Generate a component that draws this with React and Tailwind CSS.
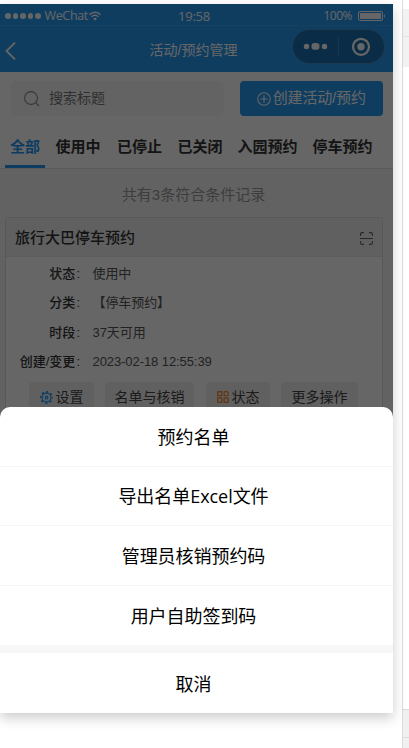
const tabs = [
  { label: "全部", cls: "w-[40px] text-[#2497f3]" },
  { label: "使用中", cls: "w-[66px]" },
  { label: "已停止", cls: "w-[57px]" },
  { label: "已关闭", cls: "w-[64px]" },
  { label: "入园预约", cls: "w-[71px]" },
  { label: "停车预约", cls: "w-[79px]" },
];

const fields = [
  ["状态", "使用中"],
  ["分类", "【停车预约】"],
  ["时段", "37天可用"],
  ["创建/变更", "2023-02-18 12:55:39"],
];

const actions = ["预约名单", "导出名单Excel文件", "管理员核销预约码", "用户自助签到码"];

function StatusBar() {
  return (
    <div className="flex h-[22px] items-center border-b border-[#3a9fee] pt-[3px] text-[13px] leading-none text-white">
      <div className="flex w-[132px] items-center pl-[5px]">
        <div className="flex gap-[2px]">
          {[0, 1, 2, 3, 4].map((i) => (
            <span key={i} className="h-[5.5px] w-[5.5px] rounded-full bg-white" />
          ))}
        </div>
        <span className="ml-[4px] w-[44.5px] whitespace-nowrap font-['Open_Sans','Noto_Sans',sans-serif] text-[12.5px] tracking-[-0.35px]">WeChat</span>
        <svg className="h-[10px] w-[12px]" viewBox="0 0 12 10" fill="none" stroke="white" strokeWidth="1.4">
          <path d="M.5 3.6Q6-1.2 11.5 3.6M2.5 5.8Q6 2.8 9.5 5.8" />
          <path d="M4.2 7.6Q6 6 7.8 7.6L6 9.8Z" fill="white" stroke="none" />
        </svg>
      </div>
      <div className="flex-1 pr-[5px] text-center font-['Open_Sans','Noto_Sans',sans-serif] text-[13px] tracking-[-0.2px]">19:58</div>
      <div className="flex w-[132px] items-center justify-end pr-[7px]">
        <span className="mr-[6px] font-['Open_Sans','Noto_Sans',sans-serif] text-[12px] tracking-[-0.5px]">100%</span>
        <svg className="h-[10px] w-[28px]" viewBox="0 0 28 10">
          <rect x=".5" y=".5" width="24" height="9" rx="1.5" fill="none" stroke="white" />
          <rect x="2" y="2" width="21" height="6" rx=".5" fill="white" />
          <path d="M26 3q2 2 0 4z" fill="white" />
        </svg>
      </div>
    </div>
  );
}

function NavBar() {
  return (
    <div className="flex h-[46px] items-center text-white">
      <div className="w-[100px] pl-[5px] pt-[4px]">
        <svg className="h-[18px] w-[11px]" viewBox="0 0 11 18" fill="none" stroke="white" strokeWidth="1.8">
          <path d="M10 .7 1.5 9 10 17.3" />
        </svg>
      </div>
      <div className="flex-1 pr-[5px] pt-[3px] text-center text-[14px]">活动/预约管理</div>
      <div className="w-[101px]">
        <div className="mt-[-5px] flex h-[35px] w-[93px] items-center rounded-full border border-[#4b91c7] bg-[#196fae]">
          <svg className="h-full w-full" viewBox="0 0 91 33" fill="white">
            <circle cx="13.5" cy="16.5" r="2.7" />
            <rect x="18.5" y="13" width="8" height="6.8" rx="3" />
            <circle cx="31.5" cy="16.5" r="2.7" />
            <path d="M45 7h1v19h-1z" fill="#4388bb" />
            <circle cx="68" cy="16.8" r="8" fill="none" stroke="white" strokeWidth="2.2" />
            <circle cx="68" cy="16.8" r="3.7" />
          </svg>
        </div>
      </div>
    </div>
  );
}

function GearIcon() {
  return (
    <svg className="h-[13px] w-[13px]" viewBox="0 0 26 26" fill="none" stroke="#2497f3">
      <circle cx="13" cy="13" r="8.8" strokeWidth="2.2" />
      <circle cx="13" cy="13" r="11.3" strokeWidth="3.2" strokeDasharray="4.4 4.475" strokeDashoffset="2.2" />
      <circle cx="13" cy="13" r="2.6" strokeWidth="2.4" />
    </svg>
  );
}

function GridIcon() {
  return (
    <svg className="h-[12px] w-[12px]" viewBox="0 0 12 12" fill="none" stroke="#f58a32" strokeWidth="1.3">
      <rect x=".7" y=".7" width="4" height="4" />
      <rect x="7.1" y=".7" width="4" height="4" rx="1" />
      <rect x=".7" y="7" width="4" height="4.3" />
      <rect x="7.1" y="7" width="4" height="4.3" />
    </svg>
  );
}

function RecordCard() {
  return (
    <div className="ml-[5px] h-[230px] w-[378px] rounded-t-[3px] border border-[#dcdcdc] bg-white">
      <div className="flex h-[39px] items-center justify-between border-b border-[#e6e6e6] bg-[#f0f0f0] pl-[9px] pr-[9px] pt-[2px]">
        <span className="text-[15px] font-medium text-[#333]">旅行大巴停车预约</span>
        <svg className="h-[13px] w-[13px]" viewBox="0 0 13 13" fill="none" stroke="#666" strokeWidth="1.1">
          <path d="M.6 4V2Q.6.6 2 .6h2M9 .6h2q1.4 0 1.4 1.4v2M.6 9v2q0 1.4 1.4 1.4h2M9 12.4h2q1.4 0 1.4-1.4V9M0 6.5h13" />
        </svg>
      </div>
      <div className="pt-[2px]">
        {fields.map(([label, value]) => (
          <div key={label} className="flex h-[29.4px] items-center text-[13px]">
            <span className="flex w-[74px] justify-end gap-[1px] font-medium text-[#333]">
              <span>{label}</span>
              <span>:</span>
            </span>
            <span className="ml-[12.5px] whitespace-nowrap tracking-[-0.08px] text-[#555]">{value}</span>
          </div>
        ))}
      </div>
      <div className="mt-[5px] flex pl-[23px] text-[14px] text-[#444]">
        <div className="flex h-[31px] w-[65px] items-center justify-center gap-[3px] rounded bg-[#f0f0f0]"><GearIcon />设置</div>
        <div className="ml-[11px] flex h-[31px] w-[89px] items-center justify-center rounded bg-[#f0f0f0]">名单与核销</div>
        <div className="ml-[12px] flex h-[31px] w-[64px] items-center justify-center gap-[3px] rounded bg-[#f0f0f0]"><GridIcon />状态</div>
        <div className="ml-[11px] flex h-[31px] w-[77px] items-center justify-center rounded bg-[#f0f0f0]">更多操作</div>
      </div>
    </div>
  );
}

function ActionSheet() {
  return (
    <div className="absolute inset-x-0 bottom-0 flex h-[306px] flex-col overflow-hidden rounded-t-[10px] bg-white font-['Open_Sans','Noto_Sans_CJK_SC',sans-serif] text-[18px] font-normal text-black">
      {actions.map((label, i) => (
        <div key={label} className={"flex h-[59.5px] items-center justify-center pr-[6px] pt-[2px] tracking-[-0.05px] " + (i < 3 ? "border-b border-[#f5f5f5]" : "")}>
          {label}
        </div>
      ))}
      <div className="h-[8px] bg-[#f7f7f7]" />
      <div className="flex h-[60px] items-center justify-center pr-[6px] pt-[3px]">取消</div>
    </div>
  );
}

export default function App() {
  return (
    <div className="flex h-[748px] w-[409px] overflow-hidden bg-white font-['Liberation_Sans','Noto_Sans_CJK_SC',sans-serif]">
      <div className="relative mt-[4px] h-[709px] w-[393px] shrink-0 bg-[#f5f5f5] shadow-[0_5px_12px_rgba(0,0,0,0.2)]">
        <div className="h-[68px] bg-[#2699f0]">
          <StatusBar />
          <NavBar />
        </div>
        <div className="h-[97px] border-b border-[#e4e4e4] bg-white">
          <div className="flex pl-[10px] pt-[9px]">
            <div className="flex h-[35px] w-[214px] items-center rounded-md bg-[#f7f7f7] pl-[14px] text-[14px] text-[#777]">
              <svg className="mr-[9px] h-[16px] w-[16px]" viewBox="0 0 16 16" fill="none" stroke="#7f8c99" strokeWidth="1.1">
                <circle cx="7" cy="7" r="6.4" />
                <path d="m12 12 3 3" />
              </svg>
              搜索标题
            </div>
            <div className="ml-[15.5px] flex h-[35px] w-[143.5px] items-center justify-center gap-[2px] rounded bg-[#2699f0] text-[15px] tracking-[-0.15px] text-white">
              <svg className="h-[14px] w-[14px]" viewBox="0 0 14 14" fill="none" stroke="white" strokeWidth="1.1">
                <circle cx="7" cy="7" r="6.3" />
                <path d="M7 3.3v7.4M3.3 7h7.4" />
              </svg>
              创建活动/预约
            </div>
          </div>
          <div className="flex h-[52px] pl-[5px] text-[15px] font-bold text-[#333]">
            {tabs.map((tab, i) => (
              <div key={tab.label} className={"flex shrink-0 flex-col items-center justify-between whitespace-nowrap pt-[20px] leading-[22px] " + tab.cls}>
                {tab.label}
                {i === 0 && <div className="h-[3px] w-full bg-[#2497f3]" />}
              </div>
            ))}
          </div>
        </div>
        <div className="flex h-[48px] items-center justify-center pr-[6px] pt-[5px] text-[15px] text-[#999]">共有3条符合条件记录</div>
        <RecordCard />
        <div className="absolute inset-0 bg-black/60" />
        <ActionSheet />
      </div>
      <div className="ml-[9px] flex w-[7px] shrink-0 flex-col border-l border-[#ddd]">
        <div className="mt-[9px] h-[28px] border-b border-[#e2e2e2] bg-[#f2f2f2]" />
        <div className="h-[30px] bg-[#f2f2f2]" />
        <div className="flex-1" />
        <div className="h-[29px] border-y border-[#ddd] bg-[#f0f0f0]" />
        <div className="h-[10px] bg-[#f0f0f0]" />
      </div>
    </div>
  );
}
